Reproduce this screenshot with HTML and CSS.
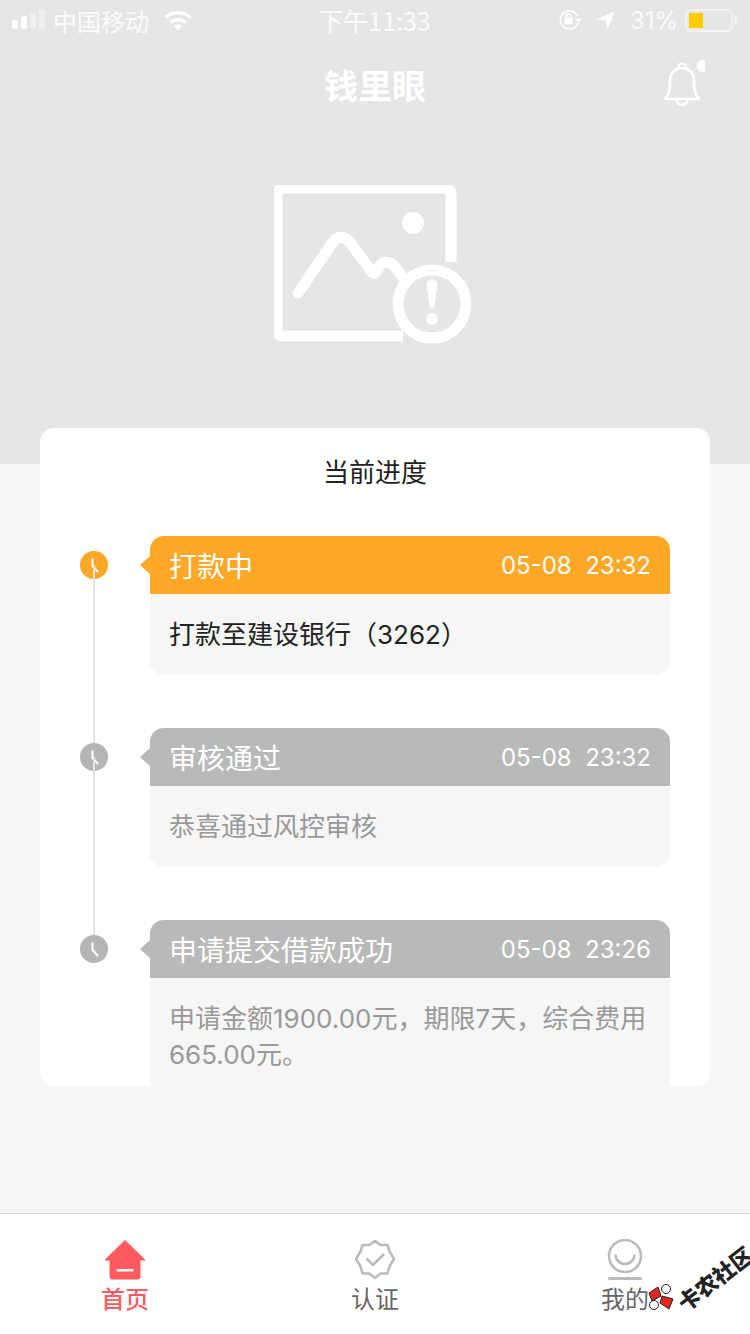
FILE: index.html
```html
<!DOCTYPE html>
<html lang="zh-CN">
<head>
    <meta charset="UTF-8">
    <meta name="viewport" content="width=device-width, initial-scale=1.0">
    <title>钱里眼</title>
    <link rel="stylesheet" href="styles.css">
</head>
<body>
    <div class="page">
        <div class="hero">
            <!-- status bar -->
            <div class="status-bar">
                <div class="status-left">
                    <svg class="signal" width="36" height="22" viewBox="0 0 36 22">
                        <rect x="0" y="11" width="6" height="9" rx="2.5" fill="#fff"/>
                        <rect x="9" y="7" width="6" height="13" rx="2.5" fill="#fff"/>
                        <rect x="18" y="4" width="6" height="16" rx="2.5" fill="#fff" opacity="0.4"/>
                        <rect x="27" y="0" width="6" height="20" rx="2.5" fill="#fff" opacity="0.4"/>
                    </svg>
                    <span class="carrier">中国移动</span>
                    <svg class="wifi" width="28" height="21" viewBox="0 0 28 21">
                        <path d="M1.5 7.5C8.5 1 19.5 1 26.5 7.5" fill="none" stroke="#fff" stroke-width="3.4"/>
                        <path d="M6.5 12.5C10.5 8.8 17.5 8.8 21.5 12.5" fill="none" stroke="#fff" stroke-width="3.4"/>
                        <path d="M9.8 16L14 20.5 18.2 16C15.8 14 12.2 14 9.8 16Z" fill="#fff"/>
                    </svg>
                </div>
                <div class="status-time">下午11:33</div>
                <div class="status-right">
                    <svg width="24" height="22" viewBox="0 0 24 22">
                        <path d="M20 13.5A9 9 0 1 1 19.5 7" fill="none" stroke="#fff" stroke-width="1.8"/>
                        <path d="M16.5 9.5L21 13.5 24 9.5Z" fill="#fff"/>
                        <rect x="6.5" y="9" width="8" height="6.5" rx="1" fill="#fff"/>
                        <path d="M8 9V7.5a2.5 2.5 0 0 1 5 0V9" fill="none" stroke="#fff" stroke-width="1.4"/>
                    </svg>
                    <svg class="arrow" width="20" height="20" viewBox="0 0 20 20">
                        <path d="M0.5 9.5L19 1 11.5 19.5 10 10.5Z" fill="#fff"/>
                    </svg>
                    <span class="battery-text">31%</span>
                    <div class="battery">
                        <div class="battery-level" style="width: 14px"></div>
                    </div>
                    <div class="battery-tip"></div>
                </div>
            </div>

            <!-- nav -->
            <div class="nav">
                <h1 class="nav-title">钱里眼</h1>
                <div class="bell">
                    <svg width="42" height="46" viewBox="0 0 42 46">
                        <path d="M2 39C7 33 7 28 7 21 7 13 12 8 19 8 26 8 31 13 31 21 31 28 31 33 36 39Z" fill="none" stroke="#fff" stroke-width="2.6" stroke-linejoin="round"/>
                        <path d="M15 7.5a4 4 0 0 1 8 0" fill="none" stroke="#fff" stroke-width="2.4"/>
                        <path d="M13.5 39.5a5.5 5.5 0 0 0 11 0" fill="none" stroke="#fff" stroke-width="2.4"/>
                        <circle cx="40" cy="6" r="6" fill="#fff" transform="translate(-0.5 0)"/>
                    </svg>
                </div>
            </div>

            <!-- broken image placeholder -->
            <div class="placeholder">
                <svg width="198" height="160" viewBox="0 0 198 160">
                    <path d="M129 151H9a6 6 0 0 1-6-6V9a6 6 0 0 1 6-6h162a6 6 0 0 1 6 6V77" fill="none" stroke="#fff" stroke-width="11"/>
                    <circle cx="139" cy="38" r="11" fill="#fff"/>
                    <path d="M24 108L59 57C63 51 70 51 75 56L98 87C103 92 103 80 109 78 113 76 118 78 121 82L138 104" fill="none" stroke="#fff" stroke-width="11" stroke-linecap="round" stroke-linejoin="round"/>
                    <circle cx="158" cy="119" r="34" fill="#e6e6e6" stroke="#fff" stroke-width="11"/>
                    <path d="M152.500 100C152.500 92 163.500 92 163.500 100L160.500 121C160 125 156 125 155.500 121Z" fill="#fff"/>
                    <circle cx="158" cy="134" r="6" fill="#fff"/>
                </svg>
            </div>
        </div>

        <div class="main">
            <div class="card">
                <h2 class="card-title">当前进度</h2>
                <div class="timeline">
                    <div class="step step-active">
                        <div class="step-mark">
                            <svg class="clock" width="28" height="28" viewBox="0 0 28 28">
                                <circle cx="14" cy="14" r="14"/>
                                <path d="M12.500 7.500V15L18 21" fill="none" stroke="#fff" stroke-width="2"/>
                            </svg>
                        </div>
                        <div class="bubble">
                            <div class="bubble-head">
                                <span class="bubble-title">打款中</span>
                                <span class="bubble-date">05-08&nbsp;&nbsp;23:32</span>
                            </div>
                            <div class="bubble-body">打款至建设银行（3262）</div>
                        </div>
                    </div>
                    <div class="step">
                        <div class="step-mark">
                            <svg class="clock" width="28" height="28" viewBox="0 0 28 28">
                                <circle cx="14" cy="14" r="14"/>
                                <path d="M12.500 7.500V15L18 21" fill="none" stroke="#fff" stroke-width="2"/>
                            </svg>
                        </div>
                        <div class="bubble">
                            <div class="bubble-head">
                                <span class="bubble-title">审核通过</span>
                                <span class="bubble-date">05-08&nbsp;&nbsp;23:32</span>
                            </div>
                            <div class="bubble-body">恭喜通过风控审核</div>
                        </div>
                    </div>
                    <div class="step step-last">
                        <div class="step-mark">
                            <svg class="clock" width="28" height="28" viewBox="0 0 28 28">
                                <circle cx="14" cy="14" r="14"/>
                                <path d="M12.500 7.500V15L18 21" fill="none" stroke="#fff" stroke-width="2"/>
                            </svg>
                        </div>
                        <div class="bubble">
                            <div class="bubble-head">
                                <span class="bubble-title">申请提交借款成功</span>
                                <span class="bubble-date">05-08&nbsp;&nbsp;23:26</span>
                            </div>
                            <div class="bubble-body">申请金额1900.00元，期限7天，综合费用665.00元。</div>
                        </div>
                    </div>
                </div>
            </div>
        </div>

        <!-- tab bar -->
        <div class="tabbar">
            <div class="tab tab-active">
                <svg width="42" height="42" viewBox="0 0 42 42">
                    <path d="M21 1.500L41 21H36V38a2 2 0 0 1-2 2H8a2 2 0 0 1-2-2V21H1Z" fill="#ff5a5f" stroke="#ff5a5f" stroke-linejoin="round"/>
                    <rect x="12.500" y="30" width="17" height="2.500" rx="1" fill="#fff"/>
                </svg>
                <span>首页</span>
            </div>
            <div class="tab">
                <svg width="42" height="42" viewBox="0 0 42 42">
                    <path d="M21 2L26.500 6H33.500L35.500 12.500 40 20 35.500 27.500 33.500 34.500H26.500L21 39 15.500 34.500H8.500L6.500 27.500 2 20 6.500 12.500 8.500 6H15.500Z" fill="none" stroke="#bbb" stroke-width="2.600" stroke-linejoin="round"/>
                    <path d="M12.500 19.500L19 26 30 15" fill="none" stroke="#bbb" stroke-width="2.600"/>
                </svg>
                <span>认证</span>
            </div>
            <div class="tab">
                <svg width="42" height="42" viewBox="0 0 42 42">
                    <circle cx="21" cy="17" r="16" fill="none" stroke="#bbb" stroke-width="2.600"/>
                    <path d="M11.500 15.500a9.500 9.500 0 0 0 19 0" fill="none" stroke="#bbb" stroke-width="2.600"/>
                    <rect x="4" y="38" width="34" height="3" rx="1.500" fill="#bbb"/>
                </svg>
                <span>我的</span>
            </div>
        </div>

        <!-- forum watermark -->
        <div class="watermark">
            <svg width="28" height="28" viewBox="0 0 28 28">
                <path d="M1 10L10 4 13 13 4 18Z" fill="#e0281f" stroke="#222"/>
                <path d="M14 13L25 16 21 26 12 20Z" fill="#e0281f" stroke="#222"/>
                <circle cx="18" cy="6" r="4.500" fill="#fff" stroke="#222"/>
                <circle cx="6" cy="22" r="4.500" fill="#fff" stroke="#222"/>
            </svg>
            <span class="watermark-text">卡农社区</span>
        </div>
    </div>
</body>
</html>
```

FILE: styles.css
```css
* {
    box-sizing: border-box;
}

body {
    margin: 0;
    font-family: "Inter", "Noto Sans CJK SC", sans-serif;
    background-color: #f7f7f7;
    color: #222;
}

.page {
    width: 750px;
    height: 1334px;
    display: flex;
    flex-direction: column;
    position: relative; /* For the watermark */
    overflow: hidden;
}

/* Grey top area */
.hero {
    height: 464px;
    flex-shrink: 0;
    background-color: #e6e6e6;
    color: #fff;
}

.status-bar {
    height: 40px;
    padding: 0 13px 0 12px;
    display: flex;
    justify-content: space-between;
    align-items: center;
    font-size: 25px;
    color: rgba(255, 255, 255, 0.9);
    position: relative;
}

.status-left, .status-right {
    display: flex;
    align-items: center;
    width: 240px;
}

.status-right {
    justify-content: flex-end;
}

.carrier {
    margin-left: 5px;
    font-family: "Noto Sans CJK SC", sans-serif;
    font-size: 24px;
}

.wifi {
    margin-left: 15px;
}

.status-time {
    font-family: "Noto Sans CJK SC", sans-serif;
    font-size: 25px;
}

.arrow {
    margin-left: 14px;
}

.battery-text {
    margin-left: 14px;
    font-size: 24px;
}

.battery {
    width: 48px;
    height: 23px;
    margin-left: 7px;
    padding: 2px;
    border: 2px solid rgba(255, 255, 255, 0.5);
    border-radius: 6px;
}

.battery-level {
    height: 100%;
    background-color: #ffcc00;
}

.battery-tip {
    width: 3px;
    height: 9px;
    margin-left: 1px;
    background-color: rgba(255, 255, 255, 0.5);
    border-radius: 0 3px 3px 0;
}

.nav {
    height: 88px;
    display: flex;
    justify-content: center;
    align-items: center;
    position: relative; /* For the bell */
}

.nav-title {
    margin: 0;
    font-family: "Noto Sans CJK SC", sans-serif;
    font-size: 34px;
    font-weight: 700;
}

.bell {
    position: absolute;
    left: 663px;
    top: 20px;
    line-height: 0;
}

.placeholder {
    padding: 57px 0 0 274px;
    line-height: 0;
}

/* Card */
.main {
    flex: 1;
    padding: 0 40px;
    margin-top: -36px;
    position: relative;
}

.card {
    height: 658px;
    padding: 0 40px;
    background-color: white;
    border-radius: 14px;
    overflow: hidden;
}

.card-title {
    margin: 0;
    height: 108px;
    padding-top: 22px;
    text-align: center;
    font-family: "Noto Sans CJK SC", sans-serif;
    font-size: 26px;
    font-weight: 400;
    line-height: 42px;
}

.step {
    display: flex;
    position: relative; /* For the connecting line */
    padding-bottom: 53px;
}

.step::before {
    content: '';
    position: absolute;
    left: 13px;
    top: 29px;
    bottom: -29px;
    width: 2px;
    background-color: #e5e5e5;
}

.step-last::before {
    display: none;
}

.step-mark {
    width: 70px;
    padding-top: 15px;
    flex-shrink: 0;
    line-height: 0;
}

.clock circle {
    fill: #b5b5b5;
}

.step-active .clock circle {
    fill: #ffa726;
}

.bubble {
    flex: 1;
    position: relative; /* For the little arrow */
    background-color: #f6f6f6;
    border-radius: 14px;
}

.bubble::before {
    content: '';
    position: absolute;
    left: -10px;
    top: 20px;
    border-right: 10px solid #b9b9b9;
    border-top: 9px solid transparent;
    border-bottom: 9px solid transparent;
}

.step-active .bubble::before {
    border-right-color: #ffa726;
}

.bubble-head {
    height: 58px;
    padding: 0 19px;
    display: flex;
    justify-content: space-between;
    align-items: center;
    background-color: #b9b9b9;
    border-radius: 14px 14px 0 0;
    color: white;
}

.step-active .bubble-head {
    background-color: #ffa726;
}

.bubble-title {
    font-family: "Noto Sans CJK SC", sans-serif;
    font-size: 28px;
}

.bubble-date {
    font-size: 24px;
}

.bubble-body {
    padding: 23px 19px 22px;
    font-size: 26px;
    line-height: 36px;
    color: #999;
    font-family: "Inter", "Noto Sans CJK SC", sans-serif;
}

.step-active .bubble-body {
    color: #222;
}

/* Bottom tabs */
.tabbar {
    height: 121px;
    flex-shrink: 0;
    display: flex;
    background-color: white;
    border-top: 1px solid #d9d9d9;
}

.tab {
    flex: 1;
    padding-top: 25px;
    display: flex;
    flex-direction: column;
    align-items: center;
    font-family: "Noto Sans CJK SC", sans-serif;
    font-size: 24px;
    line-height: 34px;
    color: #666;
}

.tab svg {
    display: block;
}

.tab-active {
    color: #ff5a5f;
    font-weight: 500;
}

/* Watermark over the corner */
.watermark {
    position: absolute;
    left: 648px;
    top: 1283px;
    display: flex;
    align-items: center;
    transform-origin: left center;
}

.watermark svg {
    flex-shrink: 0;
}

.watermark-text {
    position: absolute;
    left: 22px;
    top: -18px;
    width: 90px;
    font-family: "Noto Sans CJK SC", sans-serif;
    font-size: 22px;
    font-weight: 900;
    line-height: 24px;
    color: #222;
    transform: rotate(-38deg);
}
```
